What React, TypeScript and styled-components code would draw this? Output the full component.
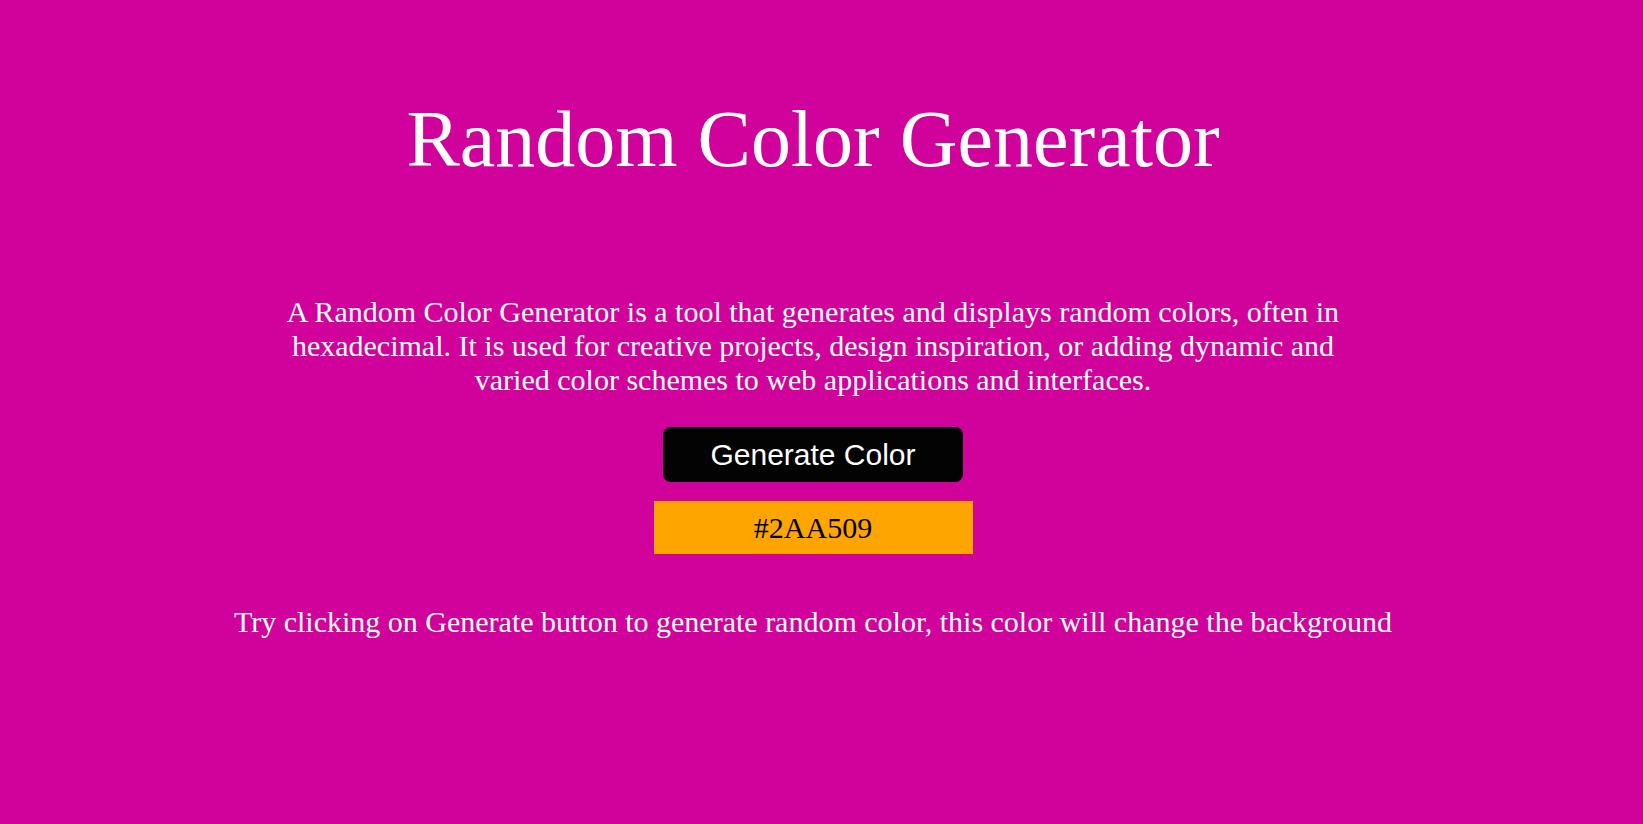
import React, { useState } from "react";
import styled, { createGlobalStyle } from "styled-components";

const GlobalStyle = createGlobalStyle<{ bg: string }>`
  html, body {
    margin: 0;
    padding: 0;
    min-height: 100%;
    background-color: ${(p) => p.bg};
  }
  body {
    font-family: "Liberation Serif", "Times New Roman", serif;
    color: #ffffff;
  }
`;

const Page = styled.main`
  display: flex;
  flex-direction: column;
  align-items: center;
  min-height: 824px;
  padding-right: 17px;
  box-sizing: border-box;
`;

const Title = styled.h1`
  font-size: 80px;
  font-weight: 400;
  line-height: normal;
  margin: 94px 0 0;
`;

const Description = styled.p`
  max-width: 1080px;
  font-size: 30px;
  line-height: normal;
  text-align: center;
  margin: 110px 0 0;
`;

const Button = styled.button`
  width: 300px;
  height: 55px;
  margin-top: 30px;
  border: none;
  border-radius: 8px;
  background-color: #030303;
  color: #ffffff;
  font-family: "Liberation Sans", Arial, sans-serif;
  font-size: 30px;
  cursor: pointer;
`;

const ColorBox = styled.div`
  width: 319px;
  height: 53px;
  margin-top: 19px;
  display: flex;
  align-items: center;
  justify-content: center;
  background-color: #ffa500;
  color: #000000;
  font-size: 30px;
`;

const Hint = styled.p`
  font-size: 30px;
  line-height: normal;
  text-align: center;
  margin: 51px 0 0;
`;

const randomHex = () =>
  "#" +
  Math.floor(Math.random() * 0xffffff)
    .toString(16)
    .toUpperCase()
    .padStart(6, "0");

export default function App() {
  const [bg, setBg] = useState("#d1029c");
  const [hex, setHex] = useState("#2AA509");

  const generate = () => {
    const next = randomHex();
    setHex(next);
    setBg(next);
  };

  return (
    <>
      <GlobalStyle bg={bg} />
      <Page>
        <Title>Random Color Generator</Title>
        <Description>
          A Random Color Generator is a tool that generates and displays random
          colors, often in hexadecimal. It is used for creative projects, design
          inspiration, or adding dynamic and varied color schemes to web
          applications and interfaces.
        </Description>
        <Button onClick={generate}>Generate Color</Button>
        <ColorBox>{hex}</ColorBox>
        <Hint>
          Try clicking on Generate button to generate random color, this color
          will change the background
        </Hint>
      </Page>
    </>
  );
}
